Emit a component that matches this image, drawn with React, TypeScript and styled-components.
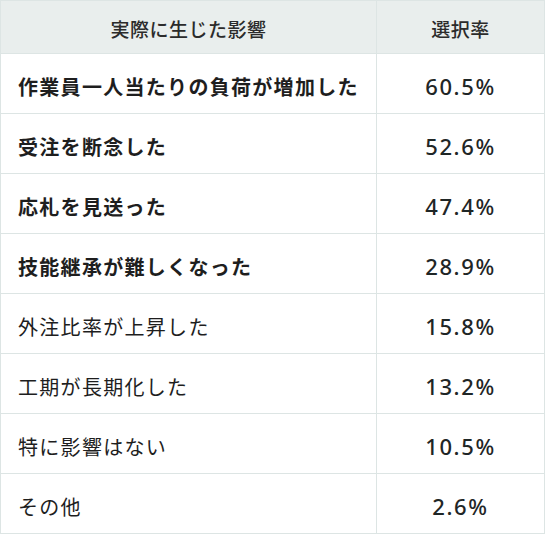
import React from 'react';
import styled, { createGlobalStyle } from 'styled-components';

const GlobalStyle = createGlobalStyle`
    html, body {
        margin: 0;
        padding: 0;
        background: #ffffff;
    }
    body {
        font-family: "Noto Sans CJK JP", "Noto Sans", sans-serif;
        color: #222;
    }
`

const Table = styled.div`
    display: grid;
    grid-template-columns: 376px 168px;
    width: 545px;
    border-top: 1px solid #dde5e4;
    border-left: 1px solid #dde5e4;
    box-sizing: border-box;
`

const HeadCell = styled.div`
    height: 53px;
    box-sizing: border-box;
    display: flex;
    align-items: center;
    justify-content: center;
    padding-top: 2px;
    background: #e9eeed;
    border-right: 1px solid #dde5e4;
    border-bottom: 1px solid #dde5e4;
    font-size: 19px;
    letter-spacing: 0.5px;
    color: #2b2b2b;
    font-weight: 500;
`

const LabelCell = styled.div<{ $bold?: boolean }>`
    height: 60px;
    box-sizing: border-box;
    display: flex;
    align-items: center;
    padding: 5px 0 0 17px;
    border-right: 1px solid #dde5e4;
    border-bottom: 1px solid #dde5e4;
    font-size: 20px;
    letter-spacing: 1.3px;
    font-weight: ${p => (p.$bold ? 700 : 400)};
    color: #1e1e1e;
`

const RateCell = styled.div`
    height: 60px;
    box-sizing: border-box;
    display: flex;
    align-items: center;
    justify-content: center;
    padding-top: 5px;
    border-right: 1px solid #dde5e4;
    border-bottom: 1px solid #dde5e4;
    font-family: "Noto Sans", "Noto Sans CJK JP", sans-serif;
    font-size: 22px;
    letter-spacing: 1.6px;
    font-weight: 500;
    color: #1f2626;
`

type Row = {
    label: string;
    rate: string;
    bold?: boolean;
}

const rows: Row[] = [
    { label: '作業員一人当たりの負荷が増加した', rate: '60.5%', bold: true },
    { label: '受注を断念した', rate: '52.6%', bold: true },
    { label: '応札を見送った', rate: '47.4%', bold: true },
    { label: '技能継承が難しくなった', rate: '28.9%', bold: true },
    { label: '外注比率が上昇した', rate: '15.8%' },
    { label: '工期が長期化した', rate: '13.2%' },
    { label: '特に影響はない', rate: '10.5%' },
    { label: 'その他', rate: '2.6%' },
];

const App = () => {
    return (
        <>
            <GlobalStyle />
            <Table>
                <HeadCell>実際に生じた影響</HeadCell>
                <HeadCell>選択率</HeadCell>
                {rows.map(row => (
                    <React.Fragment key={row.label}>
                        <LabelCell $bold={row.bold}>{row.label}</LabelCell>
                        <RateCell>{row.rate}</RateCell>
                    </React.Fragment>
                ))}
            </Table>
        </>
    );
};

export default App;
